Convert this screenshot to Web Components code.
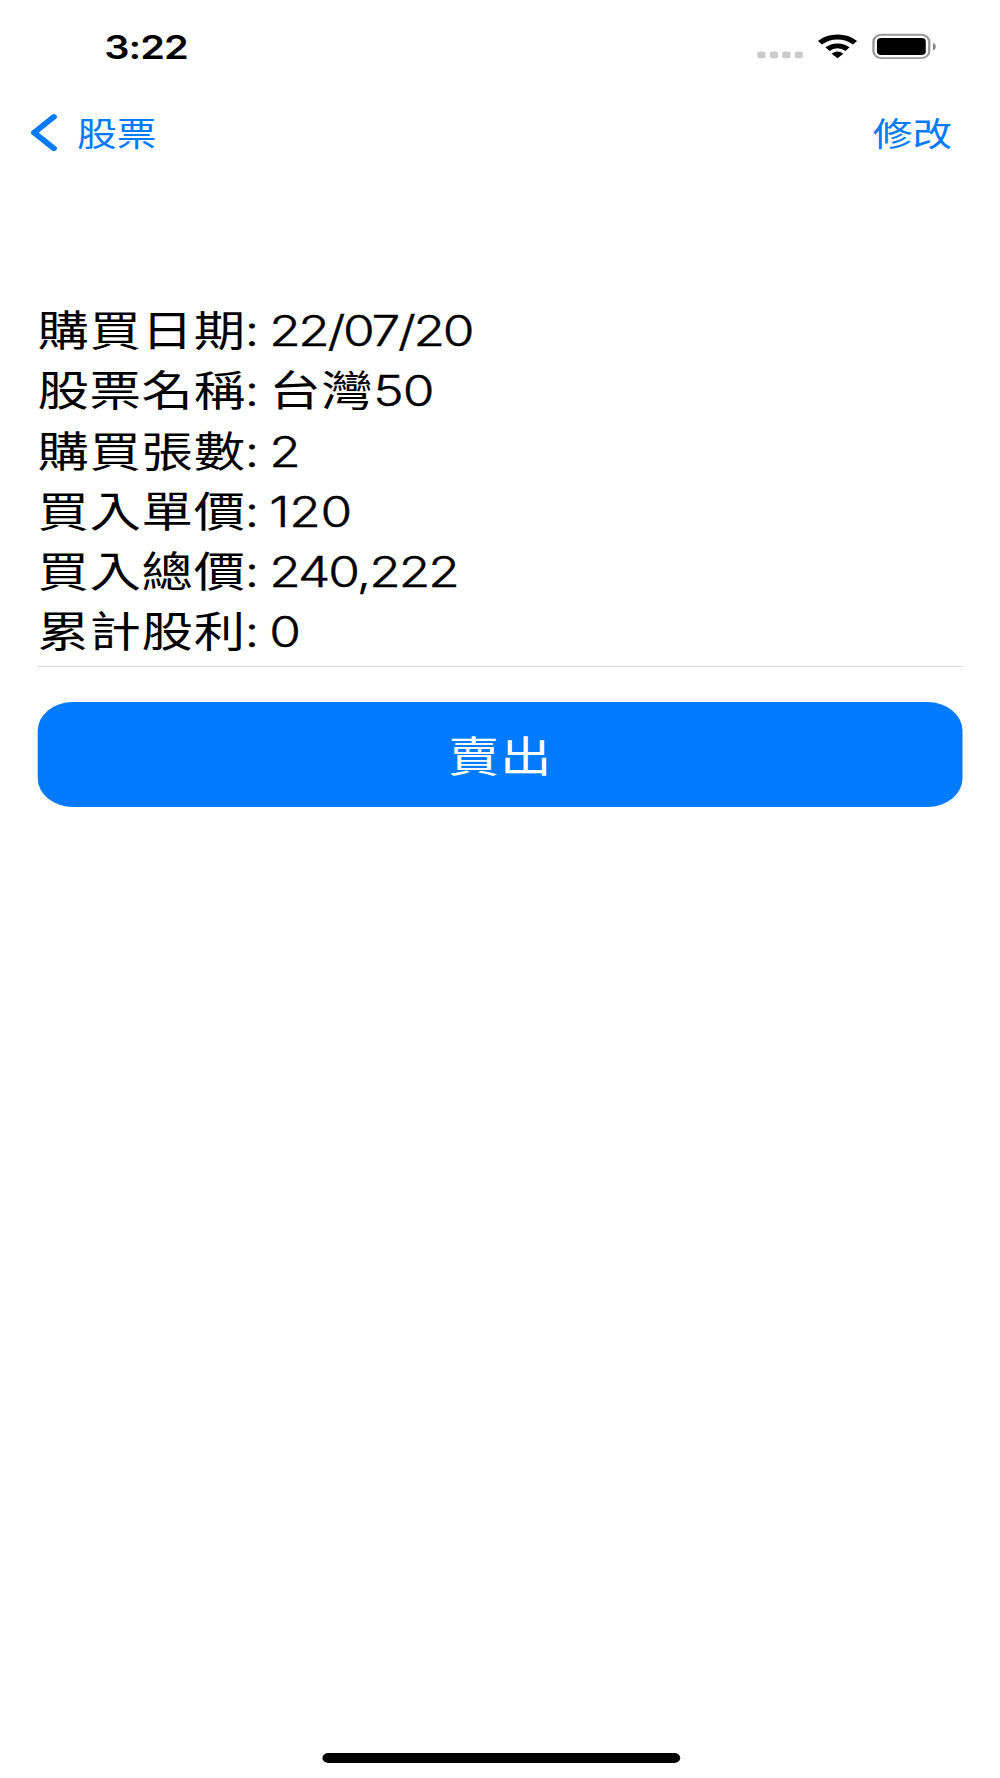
<!DOCTYPE html>
<html lang="zh-Hant">
<head>
<meta charset="utf-8">
<title>股票</title>
<style>
  html, body {
    margin: 0;
    width: 1000px;
    height: 1778px;
    overflow: hidden;
    background: #fff;
  }
</style>
</head>
<body>
<phone-screen>
  <status-bar time="3:22"></status-bar>
  <nav-bar back="股票" action="修改"></nav-bar>
  <stock-detail>
    <detail-row label="購買日期" style="--tracking: -1px">22/07/20</detail-row>
    <detail-row label="股票名稱"><cjk-text>台灣</cjk-text>50</detail-row>
    <detail-row label="購買張數">2</detail-row>
    <detail-row label="買入單價" style="--tracking: -0.1px">120</detail-row>
    <detail-row label="買入總價" style="--tracking: -0.85px">240,222</detail-row>
    <detail-row label="累計股利">0</detail-row>
  </stock-detail>
  <sell-button>賣出</sell-button>
  <home-indicator></home-indicator>
</phone-screen>

<script>
// Sizes are in points of a 428x926 screen, phone-screen stretches them to the window
class PhoneScreen extends HTMLElement {
  connectedCallback() {
    this.attachShadow({ mode: 'open' }).innerHTML = `
      <style>
        :host {
          --tint: #007aff;
          display: flex;
          flex-direction: column;
          width: 428px;
          height: 926px;
          zoom: 1.92009;
          transform: scaleX(1.21684);
          transform-origin: 0 0;
          background: #fff;
          color: #000;
          font-family: Inter, "Noto Sans CJK TC", sans-serif;
        }
      </style>
      <slot></slot>
    `;
  }
}

class StatusBar extends HTMLElement {
  connectedCallback() {
    this.attachShadow({ mode: 'open' }).innerHTML = `
      <style>
        :host {
          display: flex;
          justify-content: space-between;
          align-items: center;
          height: 48px;
          padding: 0 27px 0 44.6px;
        }
        .time {
          padding-top: 1px;
          font-size: 17px;
          font-weight: 600;
          line-height: 20px;
          letter-spacing: -0.4px;
        }
        svg { display: block; }
      </style>
      <span class="time">${this.getAttribute('time')}</span>
      <svg width="77" height="14" viewBox="324 17.2 77 14">
        <g fill="#cbcbcb">
          <rect x="324.2" y="26.9" width="3.5" height="3.5" rx="1"/>
          <rect x="329.6" y="26.9" width="3.5" height="3.5" rx="1"/>
          <rect x="334.9" y="26.9" width="3.5" height="3.5" rx="1"/>
          <rect x="340.2" y="26.9" width="3.5" height="3.5" rx="1"/>
        </g>
        <g fill="none" stroke="#000" stroke-width="2.5">
          <path d="M351 22.3A10.8 10.8 0 0 1 366 22.3"/>
          <path d="M354.2 25.6A6.3 6.3 0 0 1 362.8 25.6"/>
        </g>
        <path d="M356 28Q358.5 25.7 361 28L358.5 30.4Z"/>
        <rect x="373.9" y="18.1" width="23.9" height="12.2" rx="3.6" fill="none" stroke="#999" stroke-width="1"/>
        <rect x="375.4" y="19.8" width="20.9" height="8.9" rx="1.8"/>
        <path d="M399.4 22.4C401 23 401 25.7 399.4 26.2Z" fill="#888"/>
      </svg>
    `;
  }
}

class NavBar extends HTMLElement {
  connectedCallback() {
    this.attachShadow({ mode: 'open' }).innerHTML = `
      <style>
        :host {
          display: flex;
          justify-content: space-between;
          align-items: center;
          height: 42px;
          padding: 0 20.5px 0 13px;
          color: var(--tint);
          font-size: 17px;
          line-height: 22px;
          font-family: "Noto Sans CJK TC", sans-serif;
        }
        .back {
          display: flex;
          align-items: center;
          gap: 8px;
        }
        svg { display: block; }
      </style>
      <span class="back">
        <svg width="12" height="20" viewBox="0 0 12 20" fill="none" stroke="currentColor" stroke-width="2.7" stroke-linecap="round" stroke-linejoin="round">
          <path d="M10 2L1.6 10.2L10 18.4"/>
        </svg>
        <span>${this.getAttribute('back')}</span>
      </span>
      <span>${this.getAttribute('action')}</span>
    `;
  }
}

class StockDetail extends HTMLElement {
  connectedCallback() {
    this.attachShadow({ mode: 'open' }).innerHTML = `
      <style>
        :host {
          display: flex;
          flex-direction: column;
          margin: 67px 16px 0;
          padding-bottom: 2.2px;
          border-bottom: 0.55px solid #d8d8d8;
        }
      </style>
      <slot></slot>
    `;
  }
}

class DetailRow extends HTMLElement {
  connectedCallback() {
    this.attachShadow({ mode: 'open' }).innerHTML = `
      <style>
        :host {
          display: flex;
          height: 31.28px;
          font-size: 22px;
          line-height: 31.28px;
          white-space: nowrap;
        }
        .label {
          width: 99.2px;
          letter-spacing: 0.3px;
        }
        .colon {
          margin-left: -0.4px;
        }
        .colon, .value {
          font-weight: 300;
          -webkit-text-stroke: 0.22px currentColor;
        }
        .value {
          letter-spacing: var(--tracking, -0.5px);
        }
      </style>
      <span class="label">${this.getAttribute('label')}<span class="colon">:</span></span>
      <span class="value"><slot></slot></span>
    `;
  }
}

// Han characters inside a value keep the label's weight and spacing
class CjkText extends HTMLElement {
  connectedCallback() {
    this.attachShadow({ mode: 'open' }).innerHTML = `
      <style>
        :host {
          display: inline;
          font-weight: 400;
          letter-spacing: 0.3px;
          -webkit-text-stroke: 0;
        }
      </style>
      <slot></slot>`;
  }
}

class SellButton extends HTMLElement {
  connectedCallback() {
    this.attachShadow({ mode: 'open' }).innerHTML = `
      <style>
        :host {
          display: block;
          margin: 18.1px 16px 0;
        }
        button {
          display: block;
          width: 100%;
          height: 54.8px;
          padding: 0 0 1px;
          border: 0;
          border-radius: 15px;
          background: var(--tint);
          color: #fff;
          font: 22px/53.8px "Noto Sans CJK TC", sans-serif;
          letter-spacing: 0.3px;
        }
      </style>
      <button><slot></slot></button>
    `;
  }
}

class HomeIndicator extends HTMLElement {
  connectedCallback() {
    this.attachShadow({ mode: 'open' }).innerHTML = `
      <style>
        :host {
          display: block;
          width: 153px;
          height: 5px;
          margin: auto 137.3px 8px 137.9px;
          border-radius: 2.5px;
          background: #000;
        }
      </style>
    `;
  }
}

customElements.define('phone-screen', PhoneScreen);
customElements.define('status-bar', StatusBar);
customElements.define('nav-bar', NavBar);
customElements.define('stock-detail', StockDetail);
customElements.define('detail-row', DetailRow);
customElements.define('cjk-text', CjkText);
customElements.define('sell-button', SellButton);
customElements.define('home-indicator', HomeIndicator);
</script>
</body>
</html>
